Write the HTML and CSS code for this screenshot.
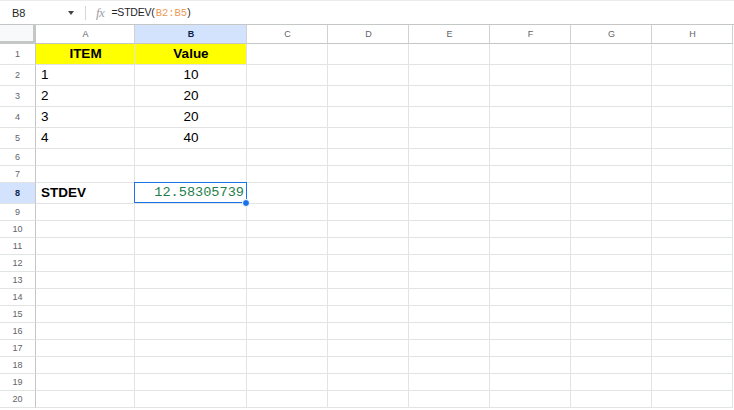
FILE: index.html
```html
<!DOCTYPE html>
<html lang="en">
<head>
  <meta charset="UTF-8" />
  <title>STDEV - Sheet</title>
  <link rel="stylesheet" href="styles.css">
</head>
<body>
  <div class="formula-bar">
    <div class="name-box">B8</div>
    <span class="caret"></span>
    <span class="divider"></span>
    <span class="fx">fx</span>
    <div class="formula">=STDEV(<span class="ref">B2:B5</span>)</div>
  </div>

  <div class="sheet">
    <div class="row head">
      <div class="rh corner"></div>
      <div class="cell ca">A</div>
      <div class="cell cb active">B</div>
      <div class="cell">C</div>
      <div class="cell">D</div>
      <div class="cell">E</div>
      <div class="cell">F</div>
      <div class="cell">G</div>
      <div class="cell">H</div>
    </div>
    <div class="row tall">
      <div class="rh">1</div>
      <div class="cell ca yellow bold center">ITEM</div>
      <div class="cell cb yellow bold center">Value</div>
      <div class="cell"></div><div class="cell"></div><div class="cell"></div><div class="cell"></div><div class="cell"></div><div class="cell"></div>
    </div>
    <div class="row tall">
      <div class="rh">2</div>
      <div class="cell ca">1</div>
      <div class="cell cb center">10</div>
      <div class="cell"></div><div class="cell"></div><div class="cell"></div><div class="cell"></div><div class="cell"></div><div class="cell"></div>
    </div>
    <div class="row tall">
      <div class="rh">3</div>
      <div class="cell ca">2</div>
      <div class="cell cb center">20</div>
      <div class="cell"></div><div class="cell"></div><div class="cell"></div><div class="cell"></div><div class="cell"></div><div class="cell"></div>
    </div>
    <div class="row tall">
      <div class="rh">4</div>
      <div class="cell ca">3</div>
      <div class="cell cb center">20</div>
      <div class="cell"></div><div class="cell"></div><div class="cell"></div><div class="cell"></div><div class="cell"></div><div class="cell"></div>
    </div>
    <div class="row tall">
      <div class="rh">5</div>
      <div class="cell ca">4</div>
      <div class="cell cb center">40</div>
      <div class="cell"></div><div class="cell"></div><div class="cell"></div><div class="cell"></div><div class="cell"></div><div class="cell"></div>
    </div>
    <div class="row">
      <div class="rh">6</div>
      <div class="cell ca"></div><div class="cell cb"></div>
      <div class="cell"></div><div class="cell"></div><div class="cell"></div><div class="cell"></div><div class="cell"></div><div class="cell"></div>
    </div>
    <div class="row">
      <div class="rh">7</div>
      <div class="cell ca"></div><div class="cell cb"></div>
      <div class="cell"></div><div class="cell"></div><div class="cell"></div><div class="cell"></div><div class="cell"></div><div class="cell"></div>
    </div>
    <div class="row tall">
      <div class="rh active">8</div>
      <div class="cell ca bold">STDEV</div>
      <div class="cell cb number selected">12.58305739<span class="handle"></span></div>
      <div class="cell"></div><div class="cell"></div><div class="cell"></div><div class="cell"></div><div class="cell"></div><div class="cell"></div>
    </div>
  </div>

  <script>
    // empty rows 9..20
    const sheet = document.querySelector('.sheet');
    for (let r = 9; r <= 20; r++) {
      let html = '<div class="rh">' + r + '</div><div class="cell ca"></div><div class="cell cb"></div>';
      for (let c = 0; c < 6; c++) html += '<div class="cell"></div>';
      const row = document.createElement('div');
      row.className = 'row';
      row.innerHTML = html;
      sheet.appendChild(row);
    }
  </script>
</body>
</html>
```

FILE: styles.css
```css
body {
  margin: 0;
  font-family: "Liberation Sans", Arial, sans-serif;
  background-color: #fff;
  color: #000;
  overflow: hidden;
}

.formula-bar {
  display: flex;
  align-items: center;
  height: 23px;
  border-top: 1px solid #ececec;
  border-bottom: 1px solid #c4c7c5;
  font-size: 11px;
  color: #1f1f1f;
}

.name-box {
  width: 56px;
  padding-left: 12px;
}

.caret {
  width: 0;
  height: 0;
  border-left: 3.5px solid transparent;
  border-right: 3.5px solid transparent;
  border-top: 4px solid #444;
  margin-top: 1px;
}

.divider {
  width: 1px;
  height: 14px;
  background-color: #d5d7d9;
  margin-left: 11px;
}

.fx {
  font-family: "Liberation Serif", serif;
  font-style: italic;
  font-size: 13px;
  color: #9aa0a6;
  margin-left: 10px;
  letter-spacing: -0.5px;
}

.formula {
  margin-left: 7px;
  font-size: 10.5px;
  letter-spacing: -0.2px;
}

.formula .ref {
  color: #eb9a55;
  font-family: "Liberation Mono", monospace;
  font-size: 10.5px;
  letter-spacing: 0;
  padding-left: 1px;
}

.row {
  display: flex;
  height: 17px;
}

.row.tall {
  height: 21px;
}

.row.head {
  height: 19px;
}

.rh, .cell {
  box-sizing: border-box;
  flex: none;
  border-bottom: 1px solid #e2e3e3;
  border-right: 1px solid #e2e3e3;
}

.cell {
  width: 81px;
  font-size: 13.5px;
  line-height: 20px;
  padding: 0 4px 0 5px;
  white-space: nowrap;
  position: relative;
}

.cell.ca {
  width: 99px;
}

.cell.cb {
  width: 112px;
}

.rh {
  width: 36px;
  font-size: 9px;
  color: #5f6368;
  text-align: center;
  border-right-color: #c4c7c5;
  border-bottom-color: #e2e3e3;
  line-height: 16px;
}

.row.tall .rh {
  line-height: 20px;
}

.rh.active {
  background-color: #d3e3fd;
  color: #0b1f4a;
  font-weight: bold;
}

.head .cell {
  font-size: 9px;
  color: #5f6368;
  text-align: center;
  line-height: 18px;
  border-bottom-color: #c4c7c5;
  border-right-color: #d0d2d2;
}

.head .cell.active {
  background-color: #d3e3fd;
  color: #0b1f4a;
  font-weight: bold;
}

.rh.corner {
  background-color: #f8f9fa;
  border-right: 3px solid #c4c7c5;
  border-bottom: 3px solid #c4c7c5;
}

.yellow {
  background-color: #ffff00;
}

.bold {
  font-weight: bold;
}

.center {
  text-align: center;
}

.number {
  text-align: right;
  font-family: "Liberation Mono", monospace;
  font-size: 13.6px;
  color: #1e7e4a;
  padding-right: 2px;
}

.selected::before {
  content: "";
  position: absolute;
  left: -1px;
  top: -1px;
  right: -1px;
  bottom: 0;
  border: 1px solid #1a73e8;
  pointer-events: none;
}

.handle {
  position: absolute;
  right: -4px;
  bottom: -4px;
  width: 6px;
  height: 6px;
  border-radius: 50%;
  background-color: #1a73e8;
  border: 1px solid #fff;
  z-index: 2;
}
```
